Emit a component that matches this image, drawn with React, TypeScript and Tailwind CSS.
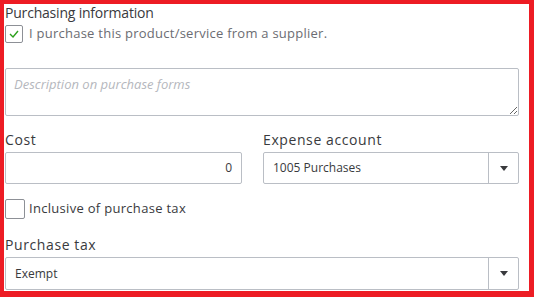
export default function App() {
  return (
    <div
      className="w-[534px] h-[297px] bg-white border-[#ed1c24] border-l-4 border-t-4 border-r-[5px] border-b-[6px] overflow-hidden text-[#393a3d]"
      style={{ fontFamily: '"Open Sans", "Liberation Sans", sans-serif' }}
    >
      <div className="pl-[1px] pr-[10px] flex flex-col">
        <div className="h-[17px] text-[14px] leading-[17px] font-medium tracking-[-0.2px]">Purchasing information</div>

        <div className="mt-[4px] flex items-center gap-[6px] h-[18px]">
          <div className="w-[18px] h-[18px] border border-[#8d9096] rounded-[2px] flex items-center justify-center">
            <svg width="10" height="8" viewBox="0 0 10 8">
              <path d="M1 4 L4 7 L9 1" fill="none" stroke="#2ca01c" strokeWidth="1.4" />
            </svg>
          </div>
          <span className="text-[13px] tracking-[0.25px] text-[#6b6c72]">I purchase this product/service from a supplier.</span>
        </div>

        <textarea
          className="mt-[25px] h-[48px] w-full border border-[#babec5] rounded-[2px] px-[8px] py-[6px] text-[13px] italic placeholder:text-[#b5b7bd] resize-y"
          placeholder="Description on purchase forms"
        />

        <div className="mt-[15px] flex gap-[21px]">
          <div className="w-[237px] flex flex-col">
            <div className="h-[18px] text-[14px] leading-[18px] tracking-[0.6px]">Cost</div>
            <div className="mt-[3px] h-[32px] border border-[#babec5] rounded-[2px] flex items-center justify-end pr-[9px] text-[12px] text-[#393a3d]">
              0
            </div>
          </div>
          <div className="flex-1 flex flex-col">
            <div className="h-[18px] text-[14px] leading-[18px] tracking-[0.6px]">Expense account</div>
            <div className="mt-[3px] h-[32px] border border-[#babec5] rounded-[2px] flex items-stretch">
              <div className="flex-1 flex items-center pl-[9px] text-[12px]">1005 Purchases</div>
              <div className="w-[30px] border-l border-[#babec5] flex items-center justify-center">
                <svg width="8" height="5" viewBox="0 0 8 5">
                  <path d="M0 0 H8 L4 5 Z" fill="#393a3d" />
                </svg>
              </div>
            </div>
          </div>
        </div>

        <div className="mt-[14px] flex items-center gap-[4px] h-[21px]">
          <div className="w-[20px] h-[20px] border border-[#8d9096] rounded-[2px]" />
          <span className="text-[13px] font-medium tracking-[0.3px]">Inclusive of purchase tax</span>
        </div>

        <div className="mt-[17px] h-[18px] text-[14px] leading-[18px] tracking-[0.6px]">Purchase tax</div>
        <div className="mt-[3px] h-[33px] border border-[#babec5] rounded-[2px] flex items-stretch">
          <div className="flex-1 flex items-center pl-[9px] text-[12px]">Exempt</div>
          <div className="w-[30px] border-l border-[#babec5] flex items-center justify-center">
            <svg width="8" height="5" viewBox="0 0 8 5">
              <path d="M0 0 H8 L4 5 Z" fill="#393a3d" />
            </svg>
          </div>
        </div>
      </div>
    </div>
  );
}
